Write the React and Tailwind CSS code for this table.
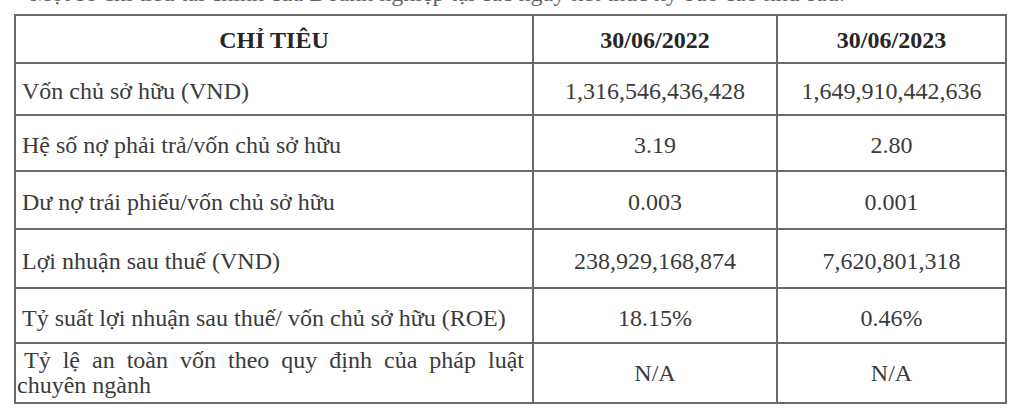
const rows = [
  { label: "Vốn chủ sở hữu (VND)", a: "1,316,546,436,428", b: "1,649,910,442,636", h: "h-[52px]" },
  { label: "Hệ số nợ phải trả/vốn chủ sở hữu", a: "3.19", b: "2.80", h: "h-[56px]" },
  { label: "Dư nợ trái phiếu/vốn chủ sở hữu", a: "0.003", b: "0.001", h: "h-[58px]" },
  { label: "Lợi nhuận sau thuế (VND)", a: "238,929,168,874", b: "7,620,801,318", h: "h-[59px]" },
  { label: "Tỷ suất lợi nhuận sau thuế/ vốn chủ sở hữu (ROE)", a: "18.15%", b: "0.46%", h: "h-[55px]" },
];

const App = () => {
  return (
    <div className="w-[1020px] h-[415px] overflow-hidden bg-white text-[#3b3b3b] font-[family-name:'Liberation_Serif','Times_New_Roman',serif]">
      <p className="-mt-[19px] h-[24px] pl-[30px] text-[24px] leading-[24px] text-[#666] whitespace-nowrap">
        Một số chỉ tiêu tài chính của Doanh nghiệp tại các ngày kết thúc kỳ báo cáo như sau:
      </p>

      <table className="ml-[14px] mt-[9px] w-[991px] table-fixed border-collapse text-[24px] leading-[25px]">
        <colgroup>
          <col className="w-[518px]" />
          <col className="w-[244px]" />
          <col className="w-[229px]" />
        </colgroup>
        <thead>
          <tr className="h-[48px]">
            <th className="border-2 border-[#6a6a6a] text-center font-bold text-[#262626] pt-[2px]">CHỈ TIÊU</th>
            <th className="border-2 border-[#6a6a6a] text-center font-bold text-[#262626] pt-[2px]">30/06/2022</th>
            <th className="border-2 border-[#6a6a6a] text-center font-bold text-[#262626] pt-[2px]">30/06/2023</th>
          </tr>
        </thead>
        <tbody>
          {rows.map((r) => (
            <tr key={r.label} className={r.h}>
              <td className="border-2 border-[#6a6a6a] pl-[6px] pt-[5px]">{r.label}</td>
              <td className="border-2 border-[#6a6a6a] text-center pt-[5px]">{r.a}</td>
              <td className="border-2 border-[#6a6a6a] text-center pt-[5px]">{r.b}</td>
            </tr>
          ))}
          <tr className="h-[60px]">
            <td className="border-2 border-[#6a6a6a] pl-[1px] pr-[8px] text-justify [text-indent:7px]">
              Tỷ lệ an toàn vốn theo quy định của pháp luật chuyên ngành
            </td>
            <td className="border-2 border-[#6a6a6a] text-center">N/A</td>
            <td className="border-2 border-[#6a6a6a] text-center">N/A</td>
          </tr>
        </tbody>
      </table>
    </div>
  );
};

export default App;
